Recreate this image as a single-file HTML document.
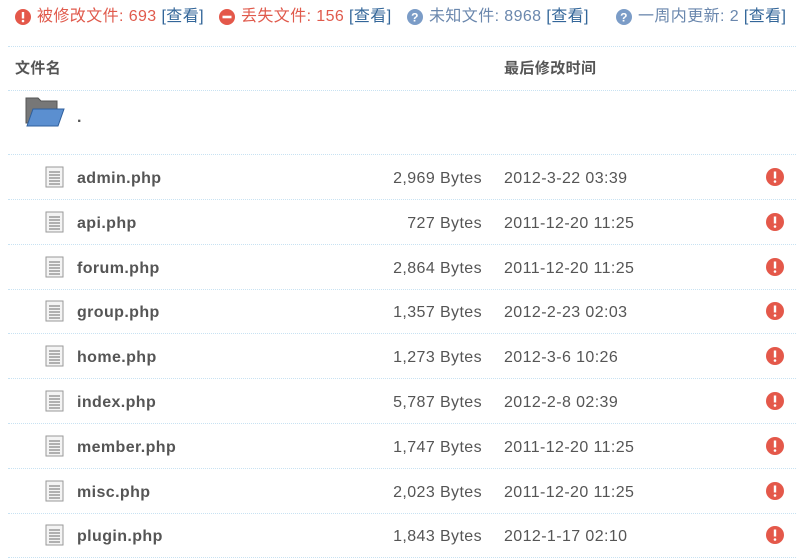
<!DOCTYPE html>
<html><head><meta charset="utf-8"><style>
body{margin:0;width:796px;height:556px;overflow:hidden;background:#fff;font-family:"Liberation Sans","Noto Sans CJK SC",sans-serif;font-size:16px;letter-spacing:0.4px;color:#555}
.g{position:absolute;top:6px;white-space:nowrap;line-height:22px}
.g svg{position:absolute;left:0;top:2px}
.g span.x{margin-left:23px}
.line{position:absolute;left:8px;right:0;border-top:1px dotted #c8e2f2}
.t{position:absolute;white-space:nowrap;line-height:20px}
</style></head><body>
<div class="g" style="left:14px"><svg width="18" height="18"><circle cx="9" cy="9" r="8" fill="#e4584a"/><rect x="7.8" y="4" width="2.4" height="6.5" fill="#fff"/><circle cx="9" cy="13" r="1.3" fill="#fff"/></svg><span class="x" style="color:#e05a4c">被修改文件: 693</span> <span style="color:#369">[查看]</span></div>
<div class="g" style="left:218px"><svg width="18" height="18"><circle cx="9" cy="9" r="8" fill="#e4584a"/><rect x="4.5" y="7.7" width="9" height="2.6" fill="#fff"/></svg><span class="x" style="color:#e05a4c">丢失文件: 156</span> <span style="color:#369">[查看]</span></div>
<div class="g" style="left:406px"><svg width="18" height="18"><circle cx="9" cy="9" r="8" fill="#7b9cc7"/><text x="9" y="13.5" text-anchor="middle" font-size="12" font-weight="bold" fill="#fff" font-family="Liberation Sans">?</text></svg><span class="x" style="color:#6a87ad">未知文件: 8968</span> <span style="color:#369">[查看]</span></div>
<div class="g" style="left:615px"><svg width="18" height="18"><circle cx="9" cy="9" r="8" fill="#7b9cc7"/><text x="9" y="13.5" text-anchor="middle" font-size="12" font-weight="bold" fill="#fff" font-family="Liberation Sans">?</text></svg><span class="x" style="color:#6a87ad">一周内更新: 2</span> <span style="color:#369">[查看]</span></div>
<div class="line" style="top:46px"></div>
<div class="t" style="left:15px;top:59px;font-weight:bold;font-size:15px">文件名</div>
<div class="t" style="left:504px;top:59px;font-weight:bold;font-size:15px">最后修改时间</div>
<div class="line" style="top:90px"></div>
<svg style="position:absolute;left:24px;top:96px" width="42" height="34"><path d="M2 2h12l3 3h16v22H2z" fill="#777" stroke="#555"/><path d="M9 13h31l-6 17H3z" fill="#5b8fd0" stroke="#2f5f9c"/></svg>
<div class="t" style="left:77px;top:108px;font-weight:bold">.</div>
<div class="line" style="top:154px"></div>
<div id="rows"></div>
<script>
var d=[["admin.php","2,969","2012-3-22 03:39"],["api.php","727","2011-12-20 11:25"],["forum.php","2,864","2011-12-20 11:25"],["group.php","1,357","2012-2-23 02:03"],["home.php","1,273","2012-3-6 10:26"],["index.php","5,787","2012-2-8 02:39"],["member.php","1,747","2011-12-20 11:25"],["misc.php","2,023","2011-12-20 11:25"],["plugin.php","1,843","2012-1-17 02:10"]];
var h="";d.forEach(function(r,i){var c=177+i*44.8;
h+='<svg style="position:absolute;left:45px;top:'+(c-11)+'px" width="20" height="22"><rect x="1" y="1" width="17" height="20" fill="#f4f4f4" stroke="#999"/><path d="M4 6h11M4 9h11M4 12h11M4 15h11M4 18h11" stroke="#888" stroke-width="1.3"/></svg>';
h+='<div class="t" style="left:77px;top:'+(c-8)+'px;font-weight:bold">'+r[0]+'</div>';
h+='<div class="t" style="right:314px;top:'+(c-8)+'px">'+r[1]+' Bytes</div>';
h+='<div class="t" style="left:504px;top:'+(c-8)+'px">'+r[2]+'</div>';
h+='<svg style="position:absolute;left:765px;top:'+(c-10)+'px" width="20" height="20"><circle cx="10" cy="10" r="9" fill="#e4584a"/><rect x="8.8" y="4.5" width="2.4" height="7" fill="#fff"/><circle cx="10" cy="14.5" r="1.3" fill="#fff"/></svg>';
h+='<div class="line" style="top:'+Math.round(c+22)+'px"></div>';});
document.getElementById("rows").innerHTML=h;
</script>
</body></html>
